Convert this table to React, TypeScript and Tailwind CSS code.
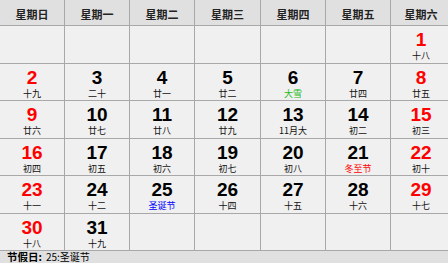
import React from "react";

type Cell = { d: number; l: string; red?: boolean; lc?: string } | null;

const rows: Cell[][] = [
  [null, null, null, null, null, null, { d: 1, l: "十八", red: true }],
  [
    { d: 2, l: "十九", red: true },
    { d: 3, l: "二十" },
    { d: 4, l: "廿一" },
    { d: 5, l: "廿二" },
    { d: 6, l: "大雪", lc: "text-[#22bb22]" },
    { d: 7, l: "廿四" },
    { d: 8, l: "廿五", red: true },
  ],
  [
    { d: 9, l: "廿六", red: true },
    { d: 10, l: "廿七" },
    { d: 11, l: "廿八" },
    { d: 12, l: "廿九" },
    { d: 13, l: "11月大" },
    { d: 14, l: "初二" },
    { d: 15, l: "初三", red: true },
  ],
  [
    { d: 16, l: "初四", red: true },
    { d: 17, l: "初五" },
    { d: 18, l: "初六" },
    { d: 19, l: "初七" },
    { d: 20, l: "初八" },
    { d: 21, l: "冬至节", lc: "text-[#ff0000]" },
    { d: 22, l: "初十", red: true },
  ],
  [
    { d: 23, l: "十一", red: true },
    { d: 24, l: "十二" },
    { d: 25, l: "圣诞节", lc: "text-[#0000ff]" },
    { d: 26, l: "十四" },
    { d: 27, l: "十五" },
    { d: 28, l: "十六" },
    { d: 29, l: "十七", red: true },
  ],
  [{ d: 30, l: "十八", red: true }, { d: 31, l: "十九" }, null, null, null, null, null],
];

const heads = ["星期日", "星期一", "星期二", "星期三", "星期四", "星期五", "星期六"];
const rowH = ["h-[37px]", "h-[36px]", "h-[37px]", "h-[36px]", "h-[37px]", "h-[36px]"];

export default function App() {
  return (
    <div className="w-[448px] h-[263px] overflow-hidden bg-[#e0e0e0] flex flex-col" style={{ fontFamily: '"Noto Sans CJK SC", sans-serif' }}>
      <div className="grid grid-cols-[64px_64px_64px_65px_64px_64px_60px] gap-px bg-[#a8a8a8] w-[452px] pb-px">
        {heads.map((h) => (
          <div key={h} className="h-[25px] bg-[#e0e0e0] flex items-center justify-center pt-[3px] text-[11px] font-bold text-[#222]">
            {h}
          </div>
        ))}
        {rows.map((r, ri) =>
          r.map((c, ci) => (
            <div key={ri + "-" + ci} className={`${rowH[ri]} bg-[#f0f0f0] flex flex-col items-center pt-[4px]`}>
              {c && (
                <>
                  <div
                    className={`text-[19px] leading-[19px] font-bold ${c.red ? "text-[#ff0000]" : "text-[#000]"}`}
                    style={{ fontFamily: '"Liberation Sans", Arial, sans-serif' }}
                  >
                    {c.d}
                  </div>
                  <div className={`mt-px text-[9px] leading-[11px] ${c.lc ?? "text-[#111]"}`}>{c.l}</div>
                </>
              )}
            </div>
          ))
        )}
      </div>
      <div className="flex flex-1 items-center pl-[7px] text-[#000]">
        <span className="text-[10.5px] leading-[10px] font-bold">节假日:</span>
        <span className="text-[10px] leading-[10px] ml-[4px]">25:圣诞节</span>
      </div>
    </div>
  );
}
